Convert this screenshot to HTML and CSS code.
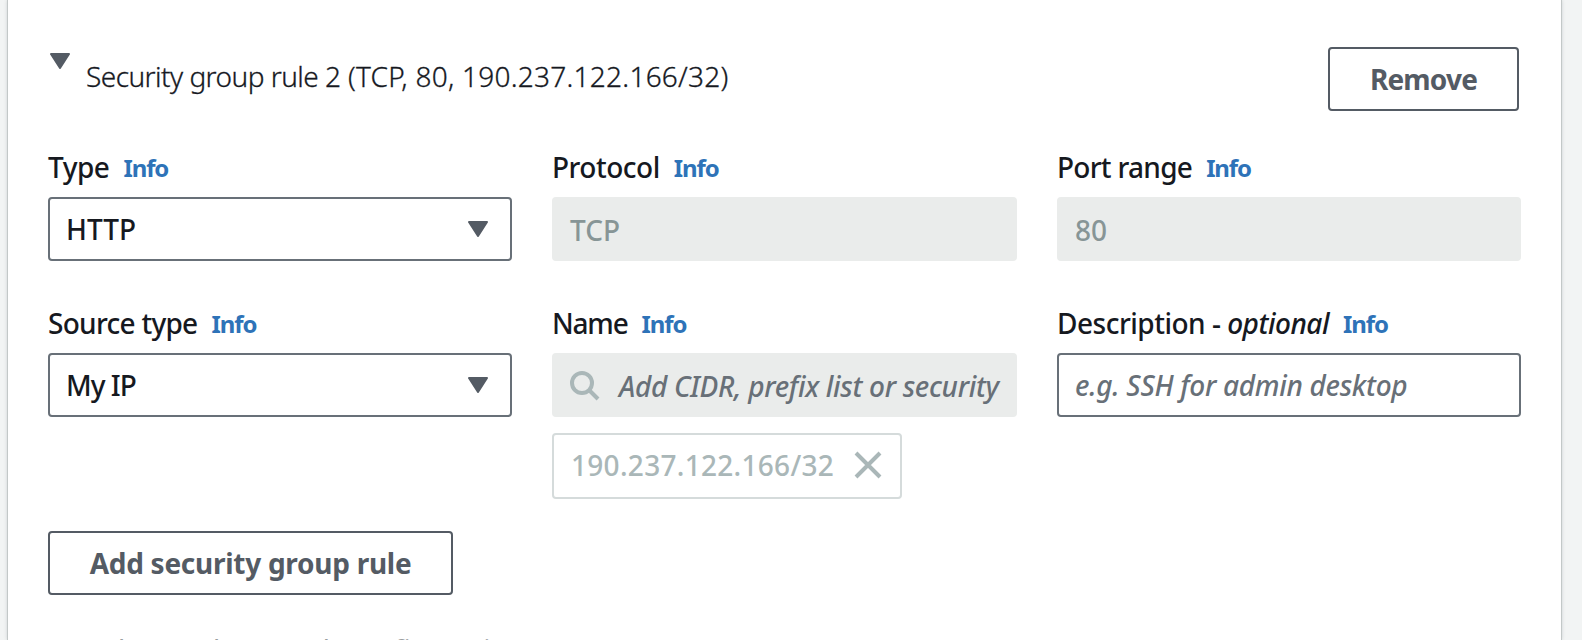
FILE: index.html
```html
<!DOCTYPE html>
<html lang="en">
<head>
<meta charset="utf-8">
<title>Security group rules</title>
<link rel="stylesheet" href="styles.css">
</head>
<body>
<main class="panel">
  <header class="rule-header">
    <div class="rule-toggle">
      <svg class="caret" width="20" height="16" viewBox="0 0 20 16"><path d="M1 1H19L10 15Z"/></svg>
      <h2 class="rule-title"><span class="rule-name">Security group rule 2</span> (TCP, 80, 190.237.122.166/32)</h2>
    </div>
    <button class="button remove">Remove</button>
  </header>
  <section class="fields">
    <div class="field">
      <div class="label"><span>Type</span><a class="info">Info</a></div>
      <div class="control"><span>HTTP</span><svg class="caret" width="20" height="16" viewBox="0 0 20 16"><path d="M1 1H19L10 15Z"/></svg></div>
    </div>
    <div class="field">
      <div class="label"><span>Protocol</span><a class="info">Info</a></div>
      <div class="control disabled"><span>TCP</span></div>
    </div>
    <div class="field">
      <div class="label"><span class="tight">Port range</span><a class="info">Info</a></div>
      <div class="control disabled"><span>80</span></div>
    </div>
    <div class="field">
      <div class="label"><span class="tight">Source type</span><a class="info">Info</a></div>
      <div class="control"><span class="source-value">My IP</span><svg class="caret" width="20" height="16" viewBox="0 0 20 16"><path d="M1 1H19L10 15Z"/></svg></div>
    </div>
    <div class="field">
      <div class="label"><span class="tighter">Name</span><a class="info">Info</a></div>
      <div class="control disabled search">
        <svg class="search-icon" width="30" height="30" viewBox="0 0 30 30"><circle cx="12" cy="12" r="10"/><path d="M19 19L28 28"/></svg>
        <span class="placeholder">Add CIDR, prefix list or security</span>
      </div>
      <div class="token"><span class="token-text">190.237.122.166/32</span><svg class="close" width="28" height="28" viewBox="0 0 28 28"><path d="M2 2L26 26M26 2L2 26"/></svg></div>
    </div>
    <div class="field">
      <div class="label"><span>Description - <em>optional</em></span><a class="info">Info</a></div>
      <div class="control"><span class="placeholder">e.g. SSH for admin desktop</span></div>
    </div>
  </section>
  <button class="button add">Add security group rule</button>
  <div class="advanced">Advanced network configuration</div>
</main>
</body>
</html>
```
FILE: styles.css
```css
* { box-sizing: border-box; }
body {
  margin: 0;
  height: 640px;
  overflow: hidden;
  padding: 0 21px 0 8px;
  background: #f2f4f4;
  color: #16191f;
  font-family: "Noto Sans", "Open Sans", sans-serif;
  font-size: 28px;
  line-height: 40px;
}
.panel {
  height: 640px;
  overflow: hidden;
  padding: 47px 40px 0 40px;
  background: #fff;
  box-shadow: 0 0 0 1px #c3c8c8, 0 0 4px rgba(0, 28, 36, .25);
}
.rule-header { display: flex; justify-content: space-between; height: 64px; padding-right: 2px; }
.rule-toggle { display: flex; gap: 16px; padding: 6px 0 0 2px; }
.rule-title {
  margin: 3px 0 0;
  font-size: 28px;
  font-weight: 300;
  letter-spacing: .25px;
  white-space: nowrap;
  -webkit-text-stroke: .3px #16191f;
}
.rule-name { letter-spacing: -.54px; }
.caret { flex: none; fill: #545b64; stroke: #545b64; stroke-width: 2; stroke-linejoin: round; }
.button {
  height: 64px;
  padding: 0;
  border: 2px solid #545b64;
  border-radius: 4px;
  background: #fff;
  color: #545b64;
  font: 700 28px/40px "Noto Sans", "Open Sans", sans-serif;
  white-space: nowrap;
}
.remove { width: 191px; padding-bottom: 1px; letter-spacing: -.8px; }
.add { width: 405px; display: block; margin-top: 32px; letter-spacing: -.27px; }
.fields { display: grid; grid-template-columns: 464px 465px 464px; column-gap: 40px; }
.field { padding-top: 36px; height: 150px; }
.field:nth-child(n+4) { padding-top: 42px; height: 238px; }
.label { display: flex; align-items: baseline; height: 50px; white-space: nowrap; font-weight: 500; letter-spacing: -.5px; }
.tight { letter-spacing: -.72px; }
.tighter { letter-spacing: -1.2px; }
.info { margin: 0 0 1px 14px; color: #2e73b8; font-size: 24px; line-height: 38px; font-weight: 700; letter-spacing: -1.1px; transform: translateY(-1px); }
.control {
  display: flex;
  align-items: center;
  justify-content: space-between;
  height: 64px;
  padding: 0 22px 0 16px;
  border: 2px solid #687078;
  border-radius: 4px;
  white-space: nowrap;
  font-weight: 500;
}
.source-value { letter-spacing: -1px; }
.disabled { padding-top: 1px; border-color: #eaeceb; background: #eaeceb; color: #879596; }
.search { justify-content: flex-start; gap: 19px; overflow: hidden; }
.search-icon { flex: none; fill: none; stroke: #aab7b8; stroke-width: 4; }
.placeholder { color: #687078; font-style: italic; letter-spacing: -.31px; }
.token {
  display: flex;
  align-items: center;
  justify-content: space-between;
  width: 350px;
  height: 66px;
  margin-top: 16px;
  padding: 0 18px 2px 17px;
  border: 2px solid #d5dbdb;
  border-radius: 4px;
  color: #aab7b8;
  font-weight: 500;
}
.token-text { letter-spacing: .29px; }
.close { flex: none; fill: none; stroke: #aab7b8; stroke-width: 4; }
.advanced { margin: 34px 0 0 42px; color: #9a9d9f; letter-spacing: .2px; white-space: nowrap; }
```
